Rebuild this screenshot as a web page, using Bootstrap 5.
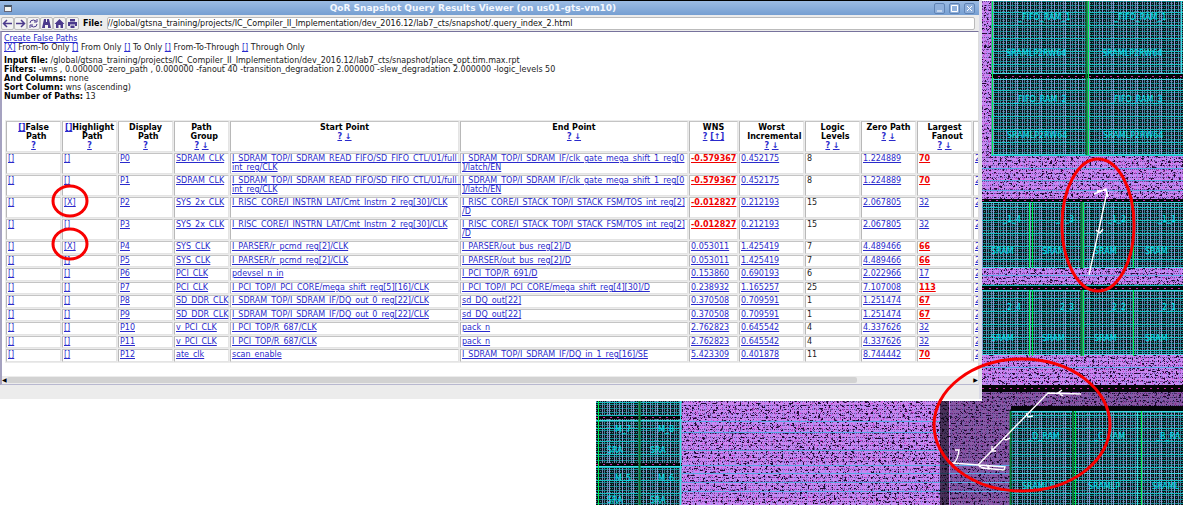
<!DOCTYPE html>
<html lang="en">
<head>
<meta charset="utf-8">
<meta name="viewport" content="width=device-width, initial-scale=1">
<title>QoR Snapshot Query Results Viewer</title>
<link href="https://cdn.jsdelivr.net/npm/bootstrap@5.3.0/dist/css/bootstrap.min.css" rel="stylesheet">
<style>
body{font-family:"DejaVu Sans",sans-serif;font-size:8px;line-height:9px;color:#222;background:#fff}
a{color:#2a2acc}
b,label{color:#000}
.desk{min-height:100vh}
.layer{left:0;top:0;width:100%;height:auto;aspect-ratio:1183/505;pointer-events:none}
.viewer{width:83%;background:#ececec;border-right:3px solid #dcdce8;padding-bottom:14px;z-index:1}
.titlebar{height:15px;border-top:1px solid #000;background:linear-gradient(#9bbbe3,#769fd2);color:#f4f8ff}
.titlebar h1{font-size:9px;font-weight:700;line-height:13px}
.winicon{width:8px;height:7px;border:1px solid #667;border-top:2px solid #456;background:#f4f4f0}
.winbtn{width:11px;height:11px;border:1px solid #5f83b4;border-radius:2px;background:#8fb0dc;color:#fff}
.toolbar{height:16px;padding-left:1px}
.toolbar .tool{width:13px;height:13px;border:1px solid #bbb;border-radius:2px;background:#f2f2f2;color:#4b3a8c}
.toolbar input{height:13px;border:1px solid #bbb;border-radius:2px;font-size:8px;line-height:9px;color:#111}
.pane{background:#fff;border-top:1px solid #77729c;border-left:2px solid #a5a2c0;border-bottom:1px solid #b8b8d0;border-right:1px solid #ddd;height:354px}
.info{padding:2px 2px 0;height:88px}
.results{width:1010px;table-layout:fixed;border-collapse:separate;border-spacing:1px;background:#ebebeb;margin-left:3px}
.results th,.results td{border:1px solid #e4e4e4;border-top-color:#c4c4c4;border-left-color:#b8b8b8;background:#fff;vertical-align:top;padding:0 1px;white-space:nowrap}
.results th{text-align:center;font-weight:700;height:31px;color:#000;padding-top:1px}
.results tbody tr{height:12px}
.results tbody tr:nth-child(odd){height:13px}
.results tbody tr.tall{height:21px}
.results a.hot{color:#f00000;font-weight:700}
.scroll{height:8px;background:#ececec;font-size:6px;line-height:8px;color:#000}
.thumb{width:88%;height:6px;background:#d2d2d2;border-radius:2px}
</style>
</head>
<body>
<main class="desk position-relative overflow-hidden">
<svg class="layer position-absolute" viewBox="0 0 1183 505" preserveAspectRatio="xMinYMin meet" role="img" aria-label="Chip layout">
<defs>
<pattern id="ram" width="24" height="13" patternUnits="userSpaceOnUse">
<rect width="24" height="13" fill="#081416"/>
<path d="M0 1.500H24M0 5.500H24M0 9.500H24" stroke="#0b8e92"/>
<path d="M0 3.500H24M0 7.500H24M0 11.500H24" stroke="#4a7890" stroke-dasharray="1 1"/>
<path d="M2.500 0V13M7.500 0V13M14.500 0V13M19.500 0V13" stroke="#6c88b4"/>
<path d="M9.500 0V13M22.500 0V13" stroke="#8c9cd4"/>
<path d="M4.500 0V13M16.500 0V13" stroke="#587098" stroke-dasharray="1 1"/>
<path d="M0 12.500H24" stroke="#18c0c4"/>
</pattern>
<pattern id="cells" width="12" height="8" patternUnits="userSpaceOnUse">
<rect width="12" height="8" fill="#c688f2"/>
<path d="M0 1.500H12M0 5.500H12" stroke="#6a4298" stroke-dasharray="1 1"/>
<path d="M3.500 0V8M9.500 0V8" stroke="#a48cf0"/>
<path d="M0 3.500H12" stroke="#d480ea" stroke-dasharray="2 1"/>
</pattern>
<filter id="specks" x="0" y="0" width="100%" height="100%" color-interpolation-filters="sRGB">
<feTurbulence type="fractalNoise" baseFrequency=".38 .6" numOctaves="3" seed="4"/>
<feColorMatrix values="0 0 0 0 .12  0 0 0 0 .03  0 0 0 0 .2  14 0 0 0 -8.400"/>
</filter>
<filter id="pinks" x="0" y="0" width="100%" height="100%" color-interpolation-filters="sRGB">
<feTurbulence type="fractalNoise" baseFrequency=".6" numOctaves="2" seed="9"/>
<feColorMatrix values="0 0 0 0 .8  0 0 0 0 .25  0 0 0 0 .8  0 10 0 0 -6.400"/>
</filter>
<clipPath id="cellclip"><path d="M982 1h9v155h-9zM982 156h201v43H982zM982 268h201v16H982zM982 355h201v30H982zM982 392h201v14H982zM682 401h329v104H682z"/></clipPath>
</defs>
<path d="M982 1h201v504H596V401h386z" fill="url(#ram)"/>
<path d="M982 1h9v155h-9zM982 156h201v43H982zM982 268h201v16H982zM982 355h201v30H982zM982 392h201v14H982zM682 401h329v104H682z" fill="url(#cells)"/>
<g clip-path="url(#cellclip)">
<rect x="596" y="0" width="587" height="505" filter="url(#pinks)"/>
<rect x="596" y="0" width="587" height="505" filter="url(#specks)"/>
<path d="M950 401h61v104h-61zM982 392h201v14H982z" fill="#10061c" opacity=".35"/>
<path d="M682 421.500h258M682 432.500h258M682 450.500h258M682 465.500h329M682 473.500h329M682 482.500h329M682 491.500h329M982 168.500h201M982 180.500h201M982 190.500h201M982 275.500h201M982 367.500h201" stroke="#58a8e4"/>
</g>
<g fill="#050508"><path d="M991 74h192v4H991zM982 199h201v3H982zM982 286h201v4H982zM982 385h201v7H982zM1011 406h172v5h-172zM596 416h86v3h-86zM596 463h86v3h-86z"/><path d="M940 401h9v104h-9z" opacity=".65"/></g>
<path d="M991 76.500h192M982 200.500h201M982 288.500h201M982 388.500h201M596 417.500h86M596 464.500h86" stroke="#c030a0" stroke-dasharray="2 5"/>
<path d="M991 73.500h192M991 79.500h192M991 154.500h192M982 202.500h201M982 267.500h201M982 290.500h201M982 354.500h201M1011 411.500h172M1011 473.500h172M596 466.500h86M596 420.500h86M680.500 401v104M1181.500 1v72M1137.500 411v94" fill="none" stroke="#40dce4"/>
<path d="M992.500 1v154M1088.500 1v154M1029.500 202v66M1032.500 202v66M1083.500 202v66M1133.500 202v66M1029.500 290v66M1032.500 290v66M1083.500 290v66M1133.500 290v66M1075.500 411v94M1141.500 411v94M598.500 401v104" fill="none" stroke="#00f04a"/>
<path d="M1086.500 1v154M1081.500 202v66M1081.500 290v66M1010.500 411v94M1073 411v94M639.500 401v104" fill="none" stroke="#087830" stroke-width="2"/>
<g fill="#00e4f0" font-family="DejaVu Sans,sans-serif" font-size="8">
<text x="1018" y="20">_FIFO_RAM_1</text><text x="1114" y="20">_FIFO_RAM_1</text>
<text x="1006" y="56">SRAMLP2RW64</text><text x="1102" y="56">SRAMLP2RW64</text>
<text x="1014" y="102">_FIFO_RAM_2</text><text x="1110" y="102">_FIFO_RAM_3</text>
<text x="1007" y="138">SRAMLP2RW64</text><text x="1103" y="138">SRAMLP2RW64</text>
<text x="1003" y="222">_1_4</text><text x="1056" y="222">_1_3</text><text x="1108" y="222">_1_2</text><text x="1158" y="222">_1_1</text>
<text x="991" y="254">SRAM</text><text x="1042" y="254">SRAM</text><text x="1094" y="254">SRAM</text><text x="1145" y="254">SRAM</text>
<text x="1003" y="310">_2_4</text><text x="1056" y="310">_2_3</text><text x="1108" y="310">_2_2</text><text x="1158" y="310">_2_1</text>
<text x="991" y="341">SRAM</text><text x="1042" y="341">SRAM</text><text x="1094" y="341">SRAM</text><text x="1145" y="341">SRAM</text>
<text x="1028" y="439">_D_RAM</text><text x="1094" y="439">_C_RAM</text><text x="1156" y="439">_B_RA</text>
<text x="1022" y="489">SRAMLP</text><text x="1088" y="489">SRAMLP</text><text x="1152" y="489">SRAML</text>
<text x="615" y="432">M_7</text><text x="658" y="432">M_8</text><text x="607" y="453">SRA</text><text x="650" y="453">SRA</text>
<text x="615" y="481">M_5</text><text x="658" y="481">M_6</text><text x="607" y="503">SRA</text><text x="650" y="503">SRA</text>
</g>
<path d="M1089 275l18-83M1094 194l12-5 2 8-2-7-9 1M1096 230l4 3 3-4M1081 394l-33-1-69 71M1062 390l-4 3 5 3M1026 413l2 4 5-1M1003 438l3 2 4-2M992 446v5h4M952 463l53 4-1 3-22-2-4-4 2 3 9 2M986 465l4 4M955 450h4q-1 9-5 13" fill="none" stroke="#fff" stroke-width="1.400"/>
</svg>

<section class="viewer position-relative">
<header class="titlebar d-flex align-items-center px-1">
<span class="winicon"></span><h1 class="flex-fill text-center m-0">QoR Snapshot Query Results Viewer (on us01-gts-vm10)</h1>
<div class="d-flex gap-1">
<button class="winbtn p-0 d-flex" aria-label="Minimize"><svg width="9" height="9"><path d="M2 7h5" stroke="#fff"/></svg></button>
<button class="winbtn p-0 d-flex" aria-label="Maximize"><svg width="9" height="9"><path d="M1.500 1.500h6v6h-6z" fill="none" stroke="#fff"/></svg></button>
<button class="winbtn p-0 d-flex" aria-label="Close"><svg width="9" height="9"><path d="M2 2l5 5M7 2l-5 5" stroke="#fff"/></svg></button>
</div></header>
<div class="toolbar d-flex align-items-center">
<div class="d-flex me-1">
<button class="tool p-0 d-flex" aria-label="Back"><svg width="11" height="11"><path d="M10 5.500H2M5 2L1.500 5.500 5 9" fill="none" stroke="currentColor" stroke-width="1.500"/></svg></button>
<button class="tool p-0 d-flex" aria-label="Forward"><svg width="11" height="11"><path d="M1 5.500h8M6 2l3.500 3.500L6 9" fill="none" stroke="currentColor" stroke-width="1.500"/></svg></button>
<button class="tool p-0 d-flex" aria-label="Reload"><svg width="11" height="11"><path d="M2 5q0-3 3.500-3L8 3M9 1v3H6M9 6q0 3-3.500 3L3 8M2 10V7h3" fill="none" stroke="currentColor"/></svg></button>
<button class="tool p-0 d-flex" aria-label="Find"><svg width="11" height="11"><path d="M3 1h2v3h1V1h2l2 9H7V7H4v3H1z" fill="currentColor"/></svg></button>
<button class="tool p-0 d-flex" aria-label="Home"><svg width="11" height="11"><path d="M5.500 1L10.500 6H9v4H6.500V7h-2v3H2V6H.5z" fill="currentColor"/></svg></button>
<button class="tool p-0 d-flex" aria-label="Print"><svg width="11" height="11"><path d="M3 1h5v2.500H3zM1 4h9v4H8V6.500H3V8H1zM3.500 7.500h4V10h-4z" fill="currentColor"/></svg></button>
</div>
<label class="fw-bold" for="file">File:</label>
<input id="file" class="flex-fill ms-1 me-1 px-0" value="//global/gtsna_training/projects/IC_Compiler_II_Implementation/dev_2016.12/lab7_cts/snapshot/.query_index_2.html">
</div>
<div class="pane d-flex flex-column overflow-hidden">
<div class="info">
<a href="#">Create False Paths</a><br>
<a href="#">[X]</a> From-To Only <a href="#">[]</a> From Only <a href="#">[]</a> To Only <a href="#">[]</a> From-To-Through <a href="#">[]</a> Through Only
<div class="mt-1"><b>Input file:</b> /global/gtsna_training/projects/IC_Compiler_II_Implementation/dev_2016.12/lab7_cts/snapshot/place_opt.tim.max.rpt</div>
<div><b>Filters:</b> -wns , 0.000000 -zero_path , 0.000000 -fanout 40 -transition_degradation 2.000000 -slew_degradation 2.000000 -logic_levels 50</div>
<div><b>And Columns:</b> none</div>
<div><b>Sort Column:</b> wns (ascending)</div>
<div><b>Number of Paths:</b> 13</div>
</div>
<div class="flex-fill overflow-hidden">
<table class="results">
<colgroup><col style="width:55px"><col style="width:55px"><col style="width:55px"><col style="width:55px"><col style="width:229px"><col style="width:228px"><col style="width:49px"><col style="width:65px"><col style="width:55px"><col style="width:55px"><col style="width:55px"><col></colgroup>
<thead><tr>
<th><a href="#">[]</a>False<br>&nbsp; Path<br><a href="#">?</a></th>
<th><a href="#">[]</a>Highlight<br>&nbsp; Path<br><a href="#">?</a></th>
<th>Display<br>&nbsp; Path<br><a href="#">?</a></th>
<th>Path<br>&nbsp; Group<br><a href="#">?</a> <a href="#">↓</a></th>
<th>Start Point<br><a href="#">?</a> <a href="#">↓</a></th>
<th>End Point<br><a href="#">?</a> <a href="#">↓</a></th>
<th>WNS<br><a href="#">?</a> <a href="#">[↑]</a></th>
<th>Worst<br>&nbsp; Incremental<br><a href="#">?</a> <a href="#">↓</a></th>
<th>Logic<br>&nbsp; Levels<br><a href="#">?</a> <a href="#">↓</a></th>
<th>Zero Path<br><a href="#">?</a> <a href="#">↓</a></th>
<th>Largest<br>&nbsp; Fanout<br><a href="#">?</a> <a href="#">↓</a></th>
<th></th>
</tr></thead>
<tbody id="rows"></tbody>
</table>
</div>
<div class="scroll d-flex align-items-center"><span>◀</span><div class="flex-fill"><div class="thumb"></div></div><span>▶</span></div>
</div>
</section>

<svg class="layer position-absolute z-2" viewBox="0 0 1183 505" preserveAspectRatio="xMinYMin meet" aria-hidden="true">
<g fill="none" stroke="#f80000" stroke-width="3"><ellipse cx="70" cy="201" rx="17" ry="15"/><ellipse cx="70" cy="244" rx="17" ry="15"/><ellipse cx="1098" cy="225" rx="36" ry="66"/><ellipse cx="1022" cy="425" rx="88" ry="66"/></g>
</svg>
</main>
<script src="https://cdn.jsdelivr.net/npm/bootstrap@5.3.0/dist/js/bootstrap.bundle.min.js"></script>
<script>
// group | start | end | wns | worst incremental | levels | zero path | fanout
const paths = [
"SDRAM_CLK|I_SDRAM_TOP/I_SDRAM_READ_FIFO/SD_FIFO_CTL/U1/full_<br>int_reg/CLK|I_SDRAM_TOP/I_SDRAM_IF/clk_gate_mega_shift_1_reg[0<br>]/latch/EN|-0.579367|0.452175|8|1.224889|70",
"SDRAM_CLK|I_SDRAM_TOP/I_SDRAM_READ_FIFO/SD_FIFO_CTL/U1/full_<br>int_reg/CLK|I_SDRAM_TOP/I_SDRAM_IF/clk_gate_mega_shift_1_reg[0<br>]/latch/EN|-0.579367|0.452175|8|1.224889|70",
"SYS_2x_CLK|I_RISC_CORE/I_INSTRN_LAT/Cmt_Instrn_2_reg[30]/CLK|I_RISC_CORE/I_STACK_TOP/I_STACK_FSM/TOS_int_reg[2]<br>/D|-0.012827|0.212193|15|2.067805|32",
"SYS_2x_CLK|I_RISC_CORE/I_INSTRN_LAT/Cmt_Instrn_2_reg[30]/CLK|I_RISC_CORE/I_STACK_TOP/I_STACK_FSM/TOS_int_reg[2]<br>/D|-0.012827|0.212193|15|2.067805|32",
"SYS_CLK|I_PARSER/r_pcmd_reg[2]/CLK|I_PARSER/out_bus_reg[2]/D|0.053011|1.425419|7|4.489466|66",
"SYS_CLK|I_PARSER/r_pcmd_reg[2]/CLK|I_PARSER/out_bus_reg[2]/D|0.053011|1.425419|7|4.489466|66",
"PCI_CLK|pdevsel_n_in|I_PCI_TOP/R_691/D|0.153860|0.690193|6|2.022966|17",
"PCI_CLK|I_PCI_TOP/I_PCI_CORE/mega_shift_reg[5][16]/CLK|I_PCI_TOP/I_PCI_CORE/mega_shift_reg[4][30]/D|0.238932|1.165257|25|7.107008|113",
"SD_DDR_CLK|I_SDRAM_TOP/I_SDRAM_IF/DQ_out_0_reg[22]/CLK|sd_DQ_out[22]|0.370508|0.709591|1|1.251474|67",
"SD_DDR_CLK|I_SDRAM_TOP/I_SDRAM_IF/DQ_out_0_reg[22]/CLK|sd_DQ_out[22]|0.370508|0.709591|1|1.251474|67",
"v_PCI_CLK|I_PCI_TOP/R_687/CLK|pack_n|2.762823|0.645542|4|4.337626|32",
"v_PCI_CLK|I_PCI_TOP/R_687/CLK|pack_n|2.762823|0.645542|4|4.337626|32",
"ate_clk|scan_enable|I_SDRAM_TOP/I_SDRAM_IF/DQ_in_1_reg[16]/SE|5.423309|0.401878|11|8.744442|70"];
const link = (t, hot) => `<td><a href="#"${hot ? ' class="hot"' : ''}>${t}</a></td>`;
document.getElementById('rows').innerHTML = paths.map((line, i) => {
  const [group, start, end, wns, inc, levels, zero, fanout] = line.split('|');
  return `<tr${end.includes('<br>') ? ' class="tall"' : ''}>` + link('[]') + link(i === 2 || i === 4 ? '[X]' : '[]') + link('P' + i) + link(group) + link(start) + link(end)
    + link(wns, wns < 0) + link(inc) + `<td>${levels}</td>` + link(zero) + link(fanout, fanout > 40) + link('2') + '</tr>';
}).join('');
</script>
</body>
</html>
